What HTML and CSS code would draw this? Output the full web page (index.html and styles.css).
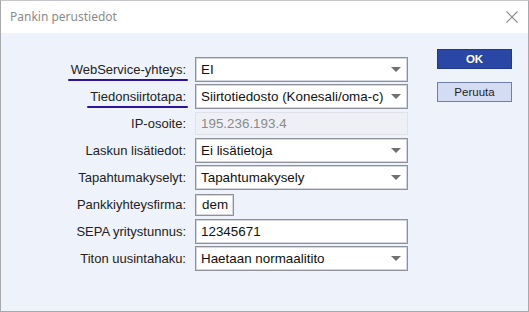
FILE: index.html
```html
<!DOCTYPE html>
<html lang="fi">
<head>
<meta charset="utf-8">
<link rel="stylesheet" href="styles.css">
</head>
<body>
<div class="window">
  <div class="titlebar">
    <span class="title">Pankin perustiedot</span>
    <svg class="close" width="12" height="12" viewBox="0 0 12 12"><path d="M0.5 0.5 L11.5 11.5 M11.5 0.5 L0.5 11.5" stroke="#8c8c8c" stroke-width="1.1" fill="none"/></svg>
  </div>
  <div class="content">
    <div class="form">
      <label class="lbl"><span class="mark">WebService-yhteys:</span></label>
      <div class="field select"><span>EI</span><i class="arrow"></i></div>

      <label class="lbl"><span class="mark">Tiedonsiirtotapa:</span></label>
      <div class="field select"><span>Siirtotiedosto (Konesali/oma-c)</span><i class="arrow"></i></div>

      <label class="lbl">IP-osoite:</label>
      <div class="field disabled"><span>195.236.193.4</span></div>

      <label class="lbl">Laskun lisätiedot:</label>
      <div class="field select"><span>Ei lisätietoja</span><i class="arrow"></i></div>

      <label class="lbl">Tapahtumakyselyt:</label>
      <div class="field select"><span>Tapahtumakysely</span><i class="arrow"></i></div>

      <label class="lbl">Pankkiyhteysfirma:</label>
      <div class="field small"><span>dem</span></div>

      <label class="lbl">SEPA yritystunnus:</label>
      <div class="field"><span>12345671</span></div>

      <label class="lbl">Titon uusintahaku:</label>
      <div class="field select"><span>Haetaan normaalitito</span><i class="arrow"></i></div>
    </div>
    <div class="buttons">
      <button class="btn primary">OK</button>
      <button class="btn secondary">Peruuta</button>
    </div>
  </div>
</div>
</body>
</html>
```

FILE: styles.css
```css
* { box-sizing: border-box; }
html, body { margin: 0; padding: 0; background: #ffffff; }
body { width: 529px; height: 312px; overflow: hidden; }

.window {
  width: 529px;
  height: 312px;
  border: 1px solid #a7a9ad;
  border-top-color: #c4c6ca;
  display: flex;
  flex-direction: column;
  font-family: "Liberation Sans", Arial, sans-serif;
}

.titlebar {
  height: 32px;
  background: #ffffff;
  display: flex;
  align-items: center;
  justify-content: space-between;
  padding: 0 10px 0 9px;
  flex: none;
}
.title {
  font-family: "Noto Sans", "Open Sans", sans-serif;
  font-size: 12px;
  color: #8b8b8b;
  margin-top: -2px;
}
.close { margin-top: -1px; }

.content {
  flex: 1;
  background: #eef2fa;
  display: flex;
  padding-top: 24px;
}

.form {
  display: grid;
  grid-template-columns: 187px 213px;
  grid-auto-rows: 25px;
  column-gap: 7px;
  row-gap: 2px;
  align-items: center;
}

.lbl {
  text-align: right;
  font-size: 13px;
  color: #222222;
  padding-right: 2px;
  white-space: nowrap;
}
.mark {
  position: relative;
  display: inline-block;
}
.mark::after {
  content: "";
  position: absolute;
  left: -3px;
  right: -2px;
  bottom: -4px;
  height: 2.5px;
  border-radius: 1px;
  background: #2b139c;
}

.field {
  height: 25px;
  background: #ffffff;
  border: 1px solid #8e9197;
  box-shadow: inset 0 0 0 1px #d3d6dc;
  display: flex;
  align-items: center;
  padding: 0 6px 0 5px;
  font-size: 13.4px;
  color: #111;
  white-space: nowrap;
  overflow: hidden;
}
.field span { flex: 1; }
.arrow {
  width: 0;
  height: 0;
  border-left: 5px solid transparent;
  border-right: 5px solid transparent;
  border-top: 5px solid #707070;
  margin-left: 4px;
}
.field.disabled {
  height: 23px;
  background: #eef0f5;
  border-color: #dfe2e8;
  box-shadow: none;
  color: #8a8a8a;
}
.field.small {
  width: 39px;
  height: 22px;
  padding-left: 6px;
}

.buttons {
  margin-left: 29px;
  margin-top: -8px;
  display: flex;
  flex-direction: column;
  gap: 13px;
}
.btn {
  width: 75px;
  height: 20px;
  font-family: "Liberation Sans", Arial, sans-serif;
  font-size: 11.5px;
  padding: 0;
  cursor: default;
}
.btn.primary {
  background: #2a47a5;
  border: 1px solid #20398c;
  color: #ffffff;
  font-weight: bold;
}
.btn.secondary {
  background: #d4dcf3;
  border: 1px solid #6f7fa8;
  color: #1e1e1e;
}
```
